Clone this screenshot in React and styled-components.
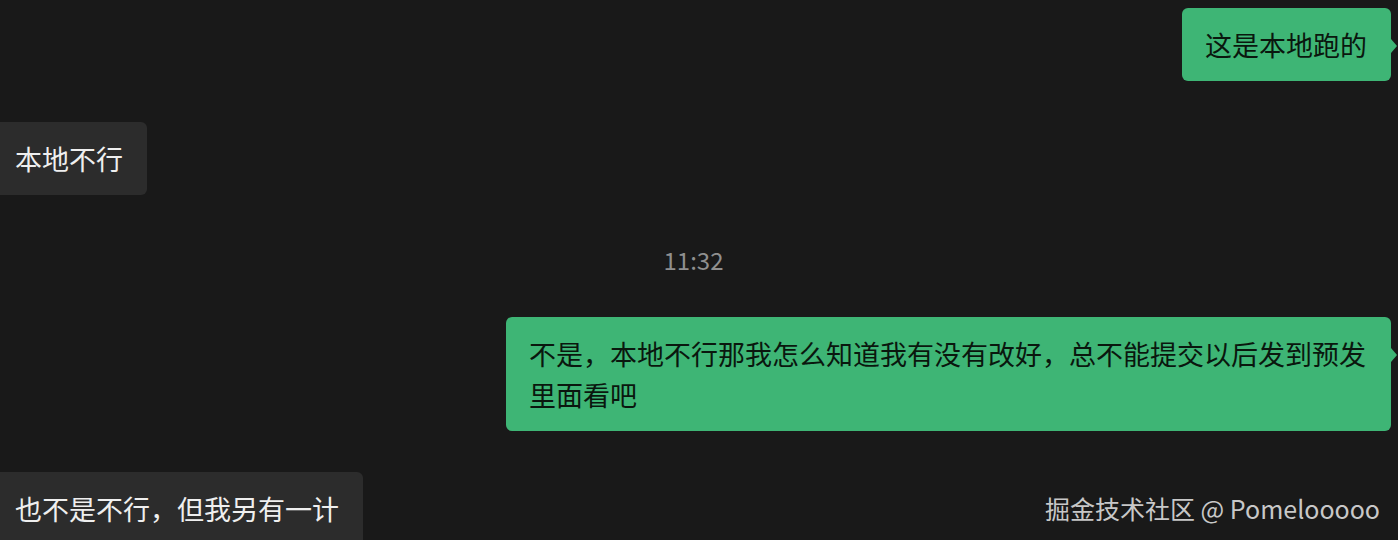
import styled, { createGlobalStyle } from "styled-components";

const GlobalStyle = createGlobalStyle`
    html, body {
        margin: 0;
        padding: 0;
        background: #191919;
        height: 540px;
        overflow: hidden;
    }
    body {
        font-family: "Noto Sans CJK SC", "Noto Sans", sans-serif;
    }
`

const messages = [
    { id: 1, type: 'msg', mine: true, text: '这是本地跑的' },
    { id: 2, type: 'msg', mine: false, text: '本地不行' },
    { id: 3, type: 'time', text: '11:32' },
    { id: 4, type: 'msg', mine: true, text: '不是，本地不行那我怎么知道我有没有改好，总不能提交以后发到预发里面看吧' },
    { id: 5, type: 'msg', mine: false, text: '也不是不行，但我另有一计' },
]

function App() {
    return (
        <>
            <GlobalStyle />
            <Chat>
                <List>
                    {messages.map(m =>
                        m.type === 'time'
                            ? <Time key={m.id}>{m.text}</Time>
                            : (
                                <Row key={m.id} mine={m.mine}>
                                    <Bubble mine={m.mine}>{m.text}</Bubble>
                                </Row>
                            )
                    )}
                </List>
                <Watermark>掘金技术社区 @ Pomelooooo</Watermark>
            </Chat>
        </>
    );
}

const Chat = styled('div')`
    position: relative;
    height: 540px;
    overflow: hidden;
    padding: 8px 7px 0 0;
    margin-left: -8px;
    box-sizing: border-box;
`

const List = styled('div')`
    display: flex;
    flex-direction: column;
    gap: 41px;
`

const Row = styled('div').withConfig({ shouldForwardProp: p => p !== 'mine' })`
    display: flex;
    justify-content: ${p => p.mine ? 'flex-end' : 'flex-start'};
`

const Bubble = styled('div').withConfig({ shouldForwardProp: p => p !== 'mine' })`
    position: relative;
    box-sizing: border-box;
    max-width: 885px;
    padding: 16px 24px 16px 23px;
    border-radius: 6px;
    font-size: 27px;
    line-height: 41px;
    background: ${p => p.mine ? '#3eb575' : '#2c2c2c'};
    color: ${p => p.mine ? '#0a170e' : '#efefef'};

    &::after {
        content: '';
        display: ${p => p.mine ? 'block' : 'none'};
        position: absolute;
        top: 31px;
        right: -6px;
        border-top: 7px solid transparent;
        border-bottom: 7px solid transparent;
        border-left: 6px solid #3eb575;
    }
`

const Time = styled('div')`
    margin: 9px 0 1px;
    padding-left: 4px;
    text-align: center;
    font-size: 24px;
    line-height: 30px;
    color: #8f8f8f;
`

const Watermark = styled('div')`
    position: absolute;
    right: 18px;
    bottom: 15px;
    font-size: 25px;
    line-height: 34px;
    color: #c8c8c8;
`

export default App;
